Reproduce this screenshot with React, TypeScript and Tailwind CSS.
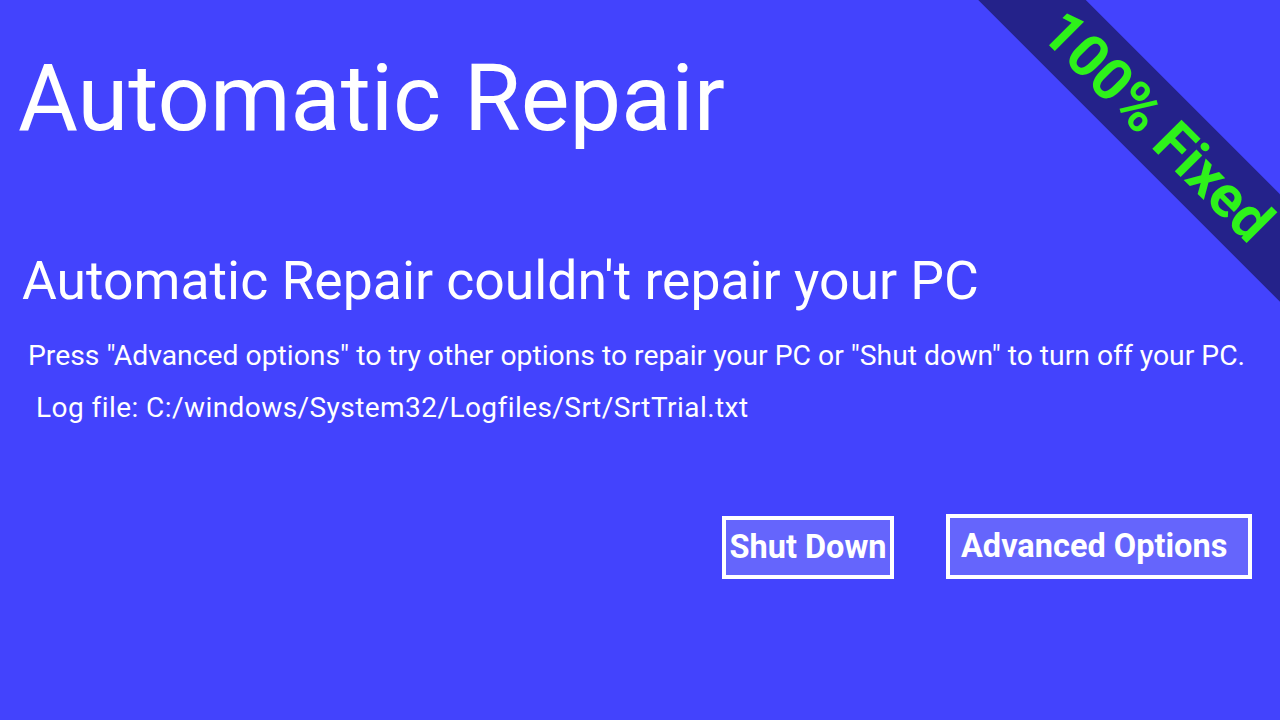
export default function App() {
  return (
    <div
      className="relative h-[720px] w-[1280px] overflow-hidden bg-[#4343fd] text-white"
      style={{ fontFamily: 'Roboto, "Liberation Sans", sans-serif' }}
    >
      <div className="flex flex-col">
        <h1 className="ml-[18px] mt-[53px] text-[92px] font-normal leading-none">Automatic Repair</h1>
        <h2 className="ml-[22px] mt-[109px] text-[53.5px] font-normal leading-none">
          Automatic Repair couldn't repair your PC
        </h2>
        <p className="ml-[28px] mt-[34px] text-[28.3px] leading-none">
          Press "Advanced options" to try other options to repair your PC or "Shut down" to turn off your PC.
        </p>
        <p className="ml-[36px] mt-[24px] text-[28px] leading-none tracking-[0.44px]">
          Log file: C:/windows/System32/Logfiles/Srt/SrtTrial.txt
        </p>
        <div className="ml-[722px] mt-[92px] flex items-end gap-[52px]">
          <button className="flex h-[63px] w-[172px] items-center justify-center border-4 border-white bg-[#6565fc] text-[32.5px] font-bold">
            Shut Down
          </button>
          <button className="flex h-[65px] w-[306px] items-center justify-start border-4 border-white bg-[#6565fc] pl-[11px] text-[32.5px] font-bold">
            Advanced Options
          </button>
        </div>
      </div>

      {/* corner ribbon */}
      <div className="absolute left-[908px] top-[88px] flex h-[76px] w-[500px] rotate-45 items-center justify-center bg-[#24228a]">
        <span className="text-[58px] font-bold leading-none text-[#2ef21a]">100% Fixed</span>
      </div>
    </div>
  )
}
